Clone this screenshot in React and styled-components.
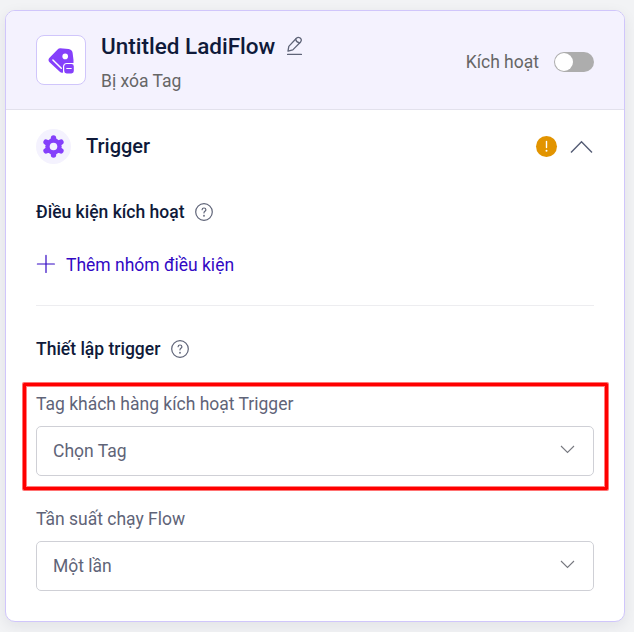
import React from "react";
import styled, { createGlobalStyle } from "styled-components";

const GlobalStyle = createGlobalStyle`
  *, *::before, *::after { box-sizing: border-box; }
  body {
    margin: 0;
    background: #f2f3f5;
    font-family: Roboto, "Liberation Sans", sans-serif;
    font-size: 17.5px;
    color: #0f1a3a;
  }
  svg { display: block; flex: none; }
`;

const Page = styled.main`
  height: 632px;
  padding: 10px 9px 10px 5px;
  overflow: hidden;
`;

const Card = styled.section`
  height: 612px;
  border: 1px solid #d0c6fb;
  border-radius: 10px;
  background: #fff;
  overflow: hidden;
  box-shadow: 0 4px 14px rgba(20, 25, 45, 0.08);
`;

const Header = styled.header`
  display: flex;
  align-items: flex-start;
  height: 99px;
  padding: 24px 30px 0;
  background: #f4f2fe;
  border-bottom: 1px solid #e2e1ec;
`;

const AppIcon = styled.div`
  display: grid;
  place-items: center;
  width: 50px;
  height: 50px;
  border: 1px solid #d0c6fb;
  border-radius: 8px;
  background: #fff;
`;

const Heading = styled.div`
  flex: 1;
  margin-left: 15px;
`;

const TitleRow = styled.div`
  display: flex;
  align-items: center;
  gap: 11px;
  height: 28px;
  margin-top: -3px;
`;

const Title = styled.h1`
  margin: 0;
  font-size: 22.5px;
  font-weight: 500;
  line-height: 28px;
`;

const Subtitle = styled.div`
  margin-top: 10px;
  color: #666;
  line-height: 22px;
`;

const Activation = styled.label`
  display: flex;
  align-items: center;
  gap: 15px;
  height: 54px;
  color: #666;
`;

const ActivationText = styled.span`
  padding-bottom: 1px;
`;

const Toggle = styled.span`
  width: 40px;
  height: 20px;
  padding: 1px;
  border-radius: 10px;
  background: #adadad;

  &::before {
    content: "";
    display: block;
    width: 18px;
    height: 18px;
    border-radius: 50%;
    background: #fff;
  }
`;

const Body = styled.div`
  padding: 19px 30px 0;
`;

const TriggerRow = styled.div`
  display: flex;
  align-items: center;
  height: 35px;
`;

const GearBadge = styled.div`
  display: grid;
  place-items: center;
  width: 35px;
  height: 35px;
  border-radius: 50%;
  background: #f4f2fe;
`;

const TriggerTitle = styled.h2`
  flex: 1;
  margin: 0 0 0 15px;
  padding-bottom: 2px;
  font-size: 20px;
  font-weight: 500;
`;

const Warning = styled.div`
  display: grid;
  place-items: center;
  width: 21px;
  height: 21px;
  margin-right: 13px;
  border-radius: 50%;
  background: #e29400;
`;

const SectionTitle = styled.h3`
  display: flex;
  align-items: center;
  gap: 11px;
  height: 20px;
  margin: ${(p) => p.$top}px 0 0;
  font-size: 17.5px;
  font-weight: 500;
`;

const AddButton = styled.button`
  display: flex;
  align-items: center;
  gap: 10px;
  height: 22px;
  margin: 31px 0 0;
  padding: 0;
  border: 0;
  background: none;
  color: #3208c4;
  font: inherit;
`;

const AddText = styled.span`
  padding-top: 2px;
`;

const Divider = styled.hr`
  height: 1px;
  margin: 30px 0 0;
  border: 0;
  background: #ededf0;
`;

const Field = styled.div`
  position: relative;
  margin-top: ${(p) => p.$top}px;
`;

const FieldLabel = styled.div`
  height: 22px;
  line-height: 22px;
  color: #5f6478;
`;

const Select = styled.div`
  display: flex;
  align-items: center;
  justify-content: space-between;
  height: 50px;
  margin-top: 11px;
  padding: 0 18px 0 16px;
  border: 1px solid #cfd0d6;
  border-radius: 5px;
  color: #5f6478;

  svg { margin-bottom: 4px; }
`;

const Highlight = styled.div`
  position: absolute;
  inset: -10px -14px -14px -13px;
  border: 3px solid #f00;
  border-radius: 1px;
  box-shadow: 0 0 0 1px rgba(255, 0, 0, 0.55), inset 0 0 0 1px rgba(255, 0, 0, 0.5);
  pointer-events: none;
`;

const TagIcon = () => (
  <svg width="27" height="27" viewBox="0 0 27 27">
    <path
      d="M12.2 1.2 20.6 2Q24 2.4 24.6 5.8L25.5 13V16H19Q15 16 15 20V25.6Q13.4 26.4 11.8 24.7L1.3 14.9Q-.3 12.9 1.3 10.9L9.6 2.4Q10.7 1.2 12.2 1.2Z"
      fill="#8540fb"
    />
    <circle cx="17.2" cy="9.4" r="2.8" fill="#fff" />
    <path d="m4.9 13 8.4 8.3" stroke="#fff" strokeWidth="1.5" strokeLinecap="round" />
    <rect x="16.2" y="17" width="9.6" height="9.4" rx="2.4" fill="#8540fb" />
    <path d="M18.8 21.5h4.4" stroke="#fff" strokeWidth="1.2" strokeLinecap="round" />
  </svg>
);

const PencilIcon = () => (
  <svg width="18" height="20" viewBox="0 0 18 20" fill="none" stroke="#5f6478" strokeWidth="1.3" strokeLinejoin="round" strokeLinecap="round">
    <path d="M2 15.1 2.8 10.4 10.4 2.2Q12.2.5 14.2 2.1T14.6 6L6.8 13.9Z" />
    <path d="M9.6 3.2Q10.3 6.4 13.6 7M1.6 18.4h13.8" />
  </svg>
);

const GearIcon = () => (
  <svg width="23" height="23" viewBox="0 0 23 23">
    <g stroke="#8540fb" strokeWidth="5.4" strokeLinecap="round">
      <path d="M11.5 2.9v17.2" />
      <path d="M11.5 2.9v17.2" transform="rotate(60 11.5 11.5)" />
      <path d="M11.5 2.9v17.2" transform="rotate(120 11.5 11.5)" />
    </g>
    <circle cx="11.5" cy="11.5" r="8.2" fill="#8540fb" />
    <circle cx="11.5" cy="11.5" r="3.8" fill="#f4f2fe" />
  </svg>
);

const HelpIcon = () => (
  <svg width="18" height="18" viewBox="0 0 18 18" fill="none" stroke="#5f6478" strokeWidth="1.2" strokeLinecap="round">
    <circle cx="9" cy="9" r="8.3" />
    <path d="M7.1 6.7Q7.2 5 9 5T10.9 6.7Q10.9 7.6 9.9 8.3T9 9.9" />
    <circle cx="9" cy="12.7" r=".35" />
  </svg>
);

const PlusIcon = () => (
  <svg width="20" height="20" viewBox="0 0 20 20" stroke="#3208c4" strokeWidth="1.2" strokeLinecap="round">
    <path d="M10 1.4v17M1.4 10h17" />
  </svg>
);

const ExclamationIcon = () => (
  <svg width="21" height="21" viewBox="0 0 21 21">
    <path d="M10.5 5.5v6.1" stroke="#fff" strokeWidth="1.4" strokeLinecap="round" />
    <circle cx="10.5" cy="14.7" r="1" fill="#fff" />
  </svg>
);

const CollapseIcon = () => (
  <svg width="24" height="14" viewBox="0 0 24 14" fill="none" stroke="#555d75" strokeWidth="1.4">
    <path d="m1 12.6 10.5-10.8L22 12.6" />
  </svg>
);

const ChevronIcon = () => (
  <svg width="15" height="9" viewBox="0 0 15 9" fill="none" stroke="#777980" strokeWidth="1.1">
    <path d="m1 1 6.5 6.5L14 1" />
  </svg>
);

export default function App() {
  return (
    <>
      <GlobalStyle />
      <Page>
        <Card>
          <Header>
            <AppIcon><TagIcon /></AppIcon>
            <Heading>
              <TitleRow>
                <Title>Untitled LadiFlow</Title>
                <PencilIcon />
              </TitleRow>
              <Subtitle>Bị xóa Tag</Subtitle>
            </Heading>
            <Activation>
              <ActivationText>Kích hoạt</ActivationText>
              <Toggle />
            </Activation>
          </Header>
          <Body>
            <TriggerRow>
              <GearBadge><GearIcon /></GearBadge>
              <TriggerTitle>Trigger</TriggerTitle>
              <Warning><ExclamationIcon /></Warning>
              <CollapseIcon />
            </TriggerRow>
            <SectionTitle $top={38}>Điều kiện kích hoạt<HelpIcon /></SectionTitle>
            <AddButton><PlusIcon /><AddText>Thêm nhóm điều kiện</AddText></AddButton>
            <Divider />
            <SectionTitle $top={33}>Thiết lập trigger<HelpIcon /></SectionTitle>
            <Field $top={34}>
              <FieldLabel>Tag khách hàng kích hoạt Trigger</FieldLabel>
              <Select>Chọn Tag<ChevronIcon /></Select>
              <Highlight />
            </Field>
            <Field $top={32}>
              <FieldLabel>Tần suất chạy Flow</FieldLabel>
              <Select>Một lần<ChevronIcon /></Select>
            </Field>
          </Body>
        </Card>
      </Page>
    </>
  );
}
